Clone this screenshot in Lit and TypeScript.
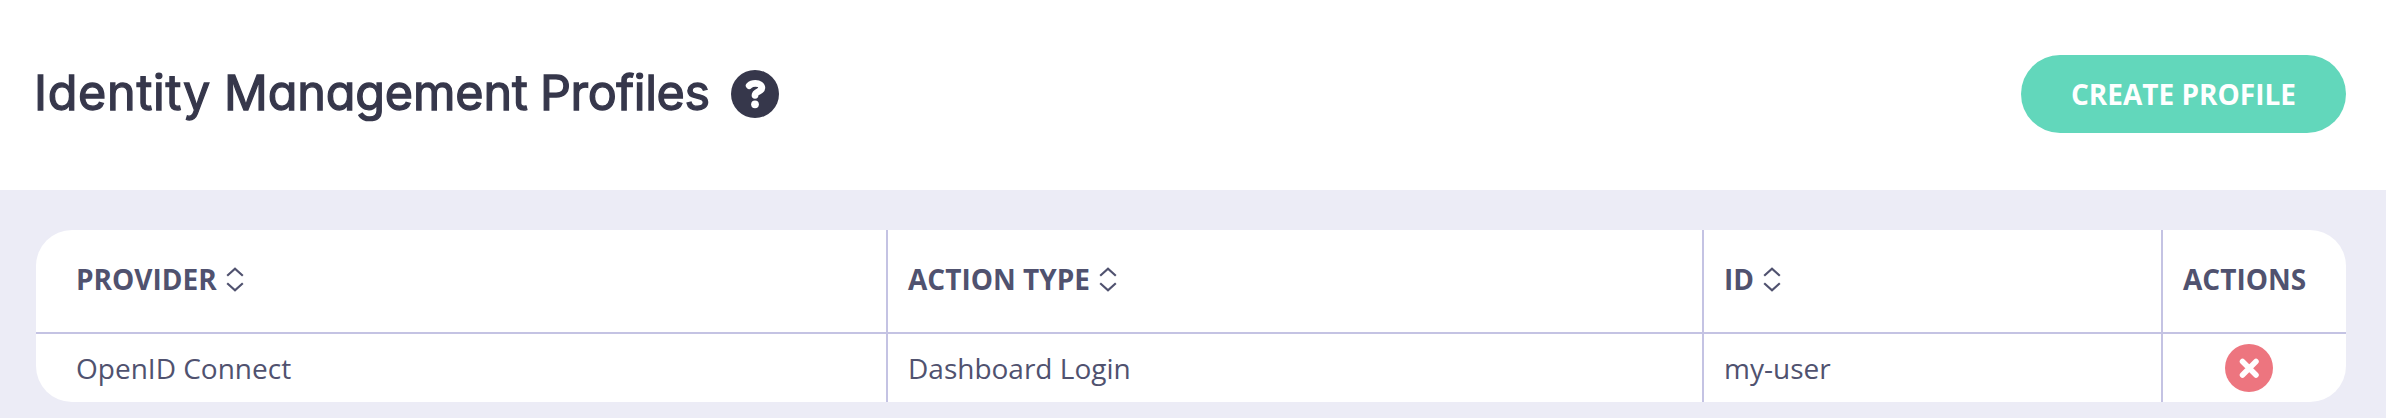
import { LitElement, html, css } from "lit";
import { customElement } from "lit/decorators.js";

@customElement("sort-icon")
class SortIcon extends LitElement {
  static styles = css`
    :host { display: block; width: 18px; height: 26px; }
    svg { display: block; }
    path { fill: none; stroke: #50526f; stroke-width: 2.2; }
  `;
  render() {
    return html`<svg width="18" height="26" viewBox="0 0 18 26">
      <path d="M1.200 9.800 9 2.800 16.800 9.800M1.200 17.200 9 24.200 16.800 17.200" />
    </svg>`;
  }
}

@customElement("app-root")
class AppRoot extends LitElement {
  static styles = css`
    :host {
      display: block;
      height: 418px;
      overflow: hidden;
      background: #ececf6;
      color: #50526f;
      font: 28px/38px "Open Sans", sans-serif;
    }
    * { box-sizing: border-box; }
    header {
      display: flex;
      align-items: center;
      height: 190px;
      padding: 0 40px 2px 36px;
      background: #fff;
    }
    h1 {
      display: flex;
      margin: 0 0 3px -2px;
      width: 697px;
      color: #36374b;
      font: 400 48.5px/60px Inter, sans-serif;
      font-feature-settings: "cv11";
      -webkit-text-stroke: 1.300px #36374b;
      stroke-linejoin: round;
      white-space: pre;
    }
    .w1 { width: 190px; letter-spacing: 0.700px; }
    .w2 { width: 316px; letter-spacing: -0.150px; }
    .w3 { letter-spacing: -0.400px; }
    .help { display: block; }
    button {
      width: 325px;
      height: 78px;
      margin-left: auto;
      padding: 0;
      border: 0;
      border-radius: 39px;
      background: #62d7bb;
      color: #fff;
      font: 700 28px/38px "Open Sans", sans-serif;
    }
    .grid {
      display: grid;
      grid-template-columns: 852px 816px 459px 183px;
      grid-template-rows: 104px 68px;
      margin: 40px 40px 0 36px;
      border-radius: 36px;
      overflow: hidden;
      background: #fff;
    }
    .cell {
      display: flex;
      align-items: center;
      gap: 9px;
      padding-left: 20px;
      border-right: 2px solid #c4c3e3;
    }
    .cell:nth-child(4n + 1) { padding-left: 40px; }
    .cell:nth-child(4n) { border-right: 0; }
    .head {
      font-weight: 700;
      padding-bottom: 4px;
      border-bottom: 2px solid #c4c3e3;
    }
    .cell.action { justify-content: center; padding: 0 11px 0 0; }
  `;
  render() {
    return html`
      <header>
        <h1><span class="w1">Identity </span><span class="w2">Management </span><span class="w3">Profiles</span></h1>
        <svg class="help" width="48" height="48" viewBox="8 8 496 496">
          <circle cx="256" cy="256" r="248" fill="#36374b" />
          <path d="M196 169C214 151 234 146 260 146C300 146 327 166 327 194C327 234 256 226 256 270" fill="none" stroke="#fff" stroke-width="70" stroke-linecap="round" stroke-linejoin="round" />
          <circle cx="256" cy="363" r="40" fill="#fff" />
        </svg>
        <button>CREATE PROFILE</button>
      </header>
      <div class="grid">
        ${["PROVIDER", "ACTION TYPE", "ID"].map((t) => html`<div class="cell head"><span>${t}</span><sort-icon></sort-icon></div>`)}
        <div class="cell head">ACTIONS</div>
        ${["OpenID Connect", "Dashboard Login", "my-user"].map((t) => html`<div class="cell">${t}</div>`)}
        <div class="cell action">
          <svg width="48" height="48" viewBox="0 0 48 48">
            <circle cx="24" cy="24" r="24" fill="#ed757f" />
            <path d="M17.500 17.500 31 31M31 17.500 17.500 31" stroke="#fff" stroke-width="5.500" stroke-linecap="round" />
          </svg>
        </div>
      </div>
    `;
  }
}
